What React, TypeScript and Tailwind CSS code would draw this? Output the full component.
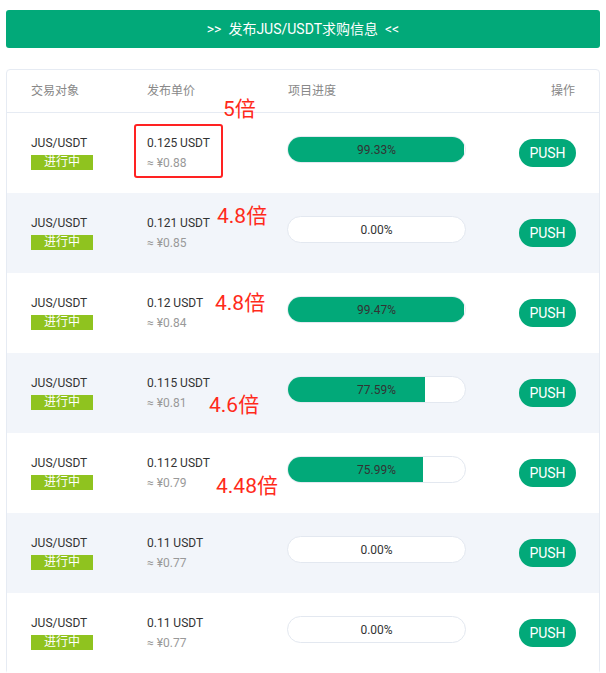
import React from "react";

type Row = {
  price: string;
  cny: string;
  progress: number;
  note?: string;
  noteClass?: string;
};

const rows: Row[] = [
  { price: "0.125 USDT", cny: "≈ ¥0.88", progress: 99.33, note: "5倍", noteClass: "left-[216px] -top-[16px]" },
  { price: "0.121 USDT", cny: "≈ ¥0.85", progress: 0, note: "4.8倍", noteClass: "left-[210px] top-[11px]" },
  { price: "0.12 USDT", cny: "≈ ¥0.84", progress: 99.47, note: "4.8倍", noteClass: "left-[208px] top-[18px]" },
  { price: "0.115 USDT", cny: "≈ ¥0.81", progress: 77.59, note: "4.6倍", noteClass: "left-[202px] top-[40px]" },
  { price: "0.112 USDT", cny: "≈ ¥0.79", progress: 75.99, note: "4.48倍", noteClass: "left-[209px] top-[41px]" },
  { price: "0.11 USDT", cny: "≈ ¥0.77", progress: 0 },
  { price: "0.11 USDT", cny: "≈ ¥0.77", progress: 0 },
];

const App = () => {
  return (
    <div className="w-[606px] h-[673px] overflow-hidden bg-white px-[6px] pt-[10px] font-['Roboto','Noto_Sans_CJK_SC',sans-serif]">
      {/* publish button */}
      <button className="w-full h-[38px] rounded-[3px] bg-[#02a979] text-white text-[14px] flex items-center justify-center">
        &gt;&gt;&nbsp; 发布JUS/USDT求购信息 &nbsp;&lt;&lt;
      </button>

      {/* table */}
      <div className="mt-[21px] border border-[#e6ebf3] rounded-[4px]">
        <div className="grid grid-cols-[116px_141px_1fr_auto] items-center h-[43px] pl-[24px] pr-[24px] border-b border-[#e6ebf3] text-[12px] text-[#888]">
          <div>交易对象</div>
          <div>发布单价</div>
          <div>项目进度</div>
          <div className="text-right">操作</div>
        </div>

        {rows.map((r, i) => (
          <div
            key={i}
            className={
              "relative grid grid-cols-[116px_141px_1fr_auto] items-center h-[80px] pl-[24px] pr-[23px] " +
              (i % 2 === 1 ? "bg-[#f2f5fa]" : "bg-white")
            }
          >
            <div className="flex flex-col items-start -mt-[2px]">
              <span className="text-[12px] text-[#333] leading-[16px]">JUS/USDT</span>
              <span className="mt-[4px] w-[62px] h-[15px] bg-[#8fc31f] text-white text-[12px] leading-[15px] text-center">
                进行中
              </span>
            </div>

            <div className="flex flex-col">
              <span className="text-[12px] text-[#333] leading-[16px]">{r.price}</span>
              <span className="mt-[4px] text-[12px] text-[#999] leading-[16px]">{r.cny}</span>
            </div>

            <div className="self-start mt-[23px]">
              <div className="relative -ml-[1px] w-[179px] h-[27px] rounded-full border border-[#e3e8f0] bg-white overflow-hidden">
                <div className="h-full bg-[#02a979]" style={{ width: `${r.progress}%` }} />
                <span className="absolute inset-0 flex items-center justify-center text-[12px] text-[#333]">
                  {r.progress.toFixed(2)}%
                </span>
              </div>
            </div>

            <button className="w-[57px] h-[28px] rounded-full bg-[#02a979] text-white text-[14px] font-normal">
              PUSH
            </button>

            {/* red annotations */}
            {i === 0 && (
              <div className="absolute left-[127px] top-[11px] w-[89px] h-[54px] border-2 border-[#ff2222] rounded-[3px]" />
            )}
            {r.note && (
              <span className={"absolute text-[21px] leading-[25px] text-[#ff2a1a] " + r.noteClass}>
                {r.note}
              </span>
            )}
          </div>
        ))}
      </div>
    </div>
  );
};

export default App;
